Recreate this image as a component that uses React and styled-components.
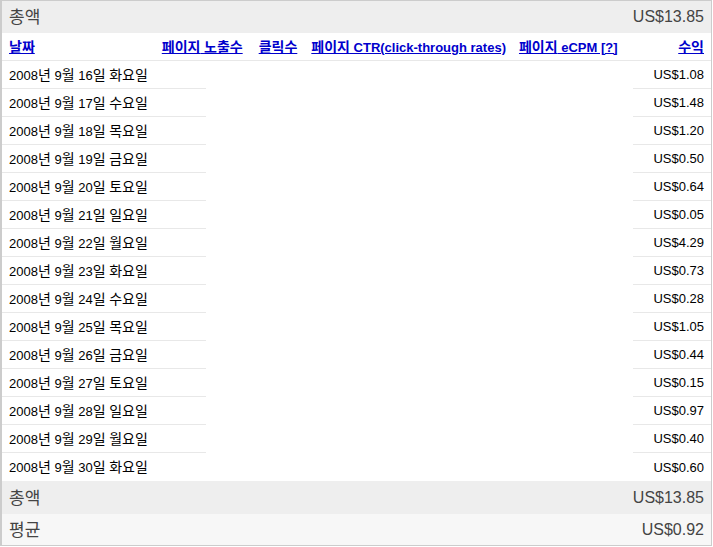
import React from "react";
import styled, { createGlobalStyle } from "styled-components";

const Global = createGlobalStyle`
  html, body { margin: 0; padding: 0; background: #fff; }
  body { font-family: "Liberation Sans", "Noto Sans CJK KR", sans-serif; }
`;

const Frame = styled.div`
  width: 709px;
  border-top: 1px solid #ccc;
  border-left: 2px solid #ccc;
  border-right: 1px solid #ccc;
  border-bottom: 1px solid #ccc;
  font-family: "Liberation Sans", "Noto Sans CJK KR", sans-serif;
`;

const Ko = styled.span`
  font-family: "Noto Sans CJK KR", sans-serif;
  font-size: ${(p) => p.$size || 14}px;
  line-height: 1;
`;

const SummaryRow = styled.div`
  display: flex;
  justify-content: space-between;
  align-items: center;
  height: ${(p) => p.$h}px;
  padding: 0 7px;
  background: ${(p) => p.$bg};
  color: #444;
  font-size: 16px;
`;

const HeaderRow = styled.div`
  display: flex;
  align-items: center;
  height: 27px;
  border-bottom: 1px solid #e8e8e8;
  padding: 0 7px;
  font-size: 13px;
  font-weight: bold;
`;

const HeadLink = styled.a`
  color: #0000cc;
  text-decoration: underline;
  margin-left: ${(p) => p.$ml || 0}px;
  white-space: nowrap;
  cursor: pointer;
`;

const Spacer = styled.span`
  flex: 1;
`;

const DataRow = styled.div`
  display: flex;
  justify-content: space-between;
  height: 28px;
  font-size: 13px;
  color: #000;
`;

const DateCell = styled.div`
  width: 197px;
  padding-left: 7px;
  display: flex;
  align-items: center;
  white-space: nowrap;
  border-bottom: ${(p) => (p.$last ? "none" : "1px solid #e8e8e8")};
`;

const MoneyCell = styled.div`
  width: 71px;
  padding-right: 7px;
  display: flex;
  align-items: center;
  justify-content: flex-end;
  border-bottom: ${(p) => (p.$last ? "none" : "1px solid #e8e8e8")};
`;

function K({ children, size }) {
  const parts = String(children).split(/([\uAC00-\uD7A3]+)/);
  return (
    <span>
      {parts.map((p, i) =>
        /[\uAC00-\uD7A3]/.test(p) ? (
          <Ko key={i} $size={size}>
            {p}
          </Ko>
        ) : (
          <React.Fragment key={i}>{p}</React.Fragment>
        )
      )}
    </span>
  );
}

const rows = [
  ["2008년 9월 16일 화요일", "US$1.08"],
  ["2008년 9월 17일 수요일", "US$1.48"],
  ["2008년 9월 18일 목요일", "US$1.20"],
  ["2008년 9월 19일 금요일", "US$0.50"],
  ["2008년 9월 20일 토요일", "US$0.64"],
  ["2008년 9월 21일 일요일", "US$0.05"],
  ["2008년 9월 22일 월요일", "US$4.29"],
  ["2008년 9월 23일 화요일", "US$0.73"],
  ["2008년 9월 24일 수요일", "US$0.28"],
  ["2008년 9월 25일 목요일", "US$1.05"],
  ["2008년 9월 26일 금요일", "US$0.44"],
  ["2008년 9월 27일 토요일", "US$0.15"],
  ["2008년 9월 28일 일요일", "US$0.97"],
  ["2008년 9월 29일 월요일", "US$0.40"],
  ["2008년 9월 30일 화요일", "US$0.60"],
];

export default function App() {
  return (
    <>
      <Global />
      <Frame>
        <SummaryRow $h={32} $bg="#eeeeee">
          <K size={17}>총액</K>
          <span>US$13.85</span>
        </SummaryRow>
        <HeaderRow>
          <HeadLink><K>날짜</K></HeadLink>
          <HeadLink $ml={127}><K>페이지 노출수</K></HeadLink>
          <HeadLink $ml={16}><K>클릭수</K></HeadLink>
          <HeadLink $ml={14}><K>페이지 CTR(click-through rates)</K></HeadLink>
          <HeadLink $ml={13}><K>페이지 eCPM [?]</K></HeadLink>
          <Spacer />
          <HeadLink><K>수익</K></HeadLink>
        </HeaderRow>
        {rows.map(([d, m], i) => (
          <DataRow key={d}>
            <DateCell $last={i === rows.length - 1}><K>{d}</K></DateCell>
            <MoneyCell $last={i === rows.length - 1}>{m}</MoneyCell>
          </DataRow>
        ))}
        <SummaryRow $h={33} $bg="#eeeeee">
          <K size={17}>총액</K>
          <span>US$13.85</span>
        </SummaryRow>
        <SummaryRow $h={31} $bg="#f7f7f7">
          <K size={17}>평균</K>
          <span>US$0.92</span>
        </SummaryRow>
      </Frame>
    </>
  );
}
